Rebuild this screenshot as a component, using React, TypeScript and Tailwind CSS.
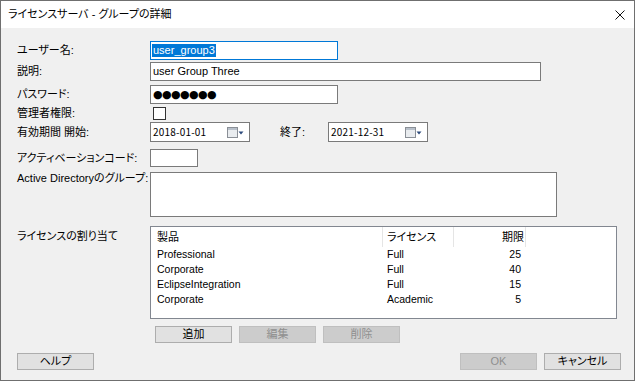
import React from 'react';

const jp = "font-['Liberation_Sans','Noto_Sans_CJK_JP',sans-serif] [font-feature-settings:'palt']";
const cjk = "font-['Noto_Sans_CJK_JP','Noto_Sans',sans-serif] [font-feature-settings:'palt']";

interface LicenseRow {
  product: string;
  license: string;
  limit: number;
}

const rows: LicenseRow[] = [
  { product: 'Professional', license: 'Full', limit: 25 },
  { product: 'Corporate', license: 'Full', limit: 40 },
  { product: 'EclipseIntegration', license: 'Full', limit: 15 },
  { product: 'Corporate', license: 'Academic', limit: 5 },
];

const CalendarIcon: React.FC = () => (
  <svg width="17" height="11" viewBox="0 0 17 11" className="shrink-0">
    <rect x="0.5" y="0.5" width="10" height="10" fill="#e9ecef" stroke="#8a8f96" />
    <rect x="1" y="1" width="9" height="2" fill="#b8c0ca" />
    <path d="M11.5 4.5 L16.5 4.5 L14 7.5 Z" fill="#2c4a7c" />
  </svg>
);

const DateBox: React.FC<{ value: string }> = ({ value }) => (
  <div className="w-[100px] h-[20px] bg-white border border-[#7a7a7a] flex items-center pl-[2px] pr-[5px] justify-between">
    <span className={`${cjk} text-[10px] leading-none text-black tracking-[0.2px]`}>{value}</span>
    <CalendarIcon />
  </div>
);

const Button: React.FC<{ label: string; disabled?: boolean }> = ({ label, disabled }) => (
  <div
    className={`w-[77px] h-[17px] flex items-center justify-center border text-[11px] leading-none ${jp} ${
      disabled ? 'bg-[#cccccc] border-[#bfbfbf] text-[#8f8f8f]' : 'bg-[#e1e1e1] border-[#adadad] text-black'
    }`}
  >
    {label}
  </div>
);

const Label: React.FC<{ children: React.ReactNode }> = ({ children }) => (
  <div className={`w-[133px] shrink-0 whitespace-nowrap text-[11px] leading-none text-black ${jp}`}>{children}</div>
);

const App: React.FC = () => {
  return (
    <div className="w-[635px] h-[381px] border border-[#6f6f6f] flex flex-col bg-white overflow-hidden">
      {/* title bar */}
      <div className="h-[27px] shrink-0 bg-white flex items-center justify-between pl-[7px] pr-[9px]">
        <span className={`${jp} text-[11px] leading-none text-black`}>ライセンスサーバ - グループの詳細</span>
        <svg width="10" height="10" viewBox="0 0 10 10">
          <path d="M0.5 0.5 L9.5 9.5 M9.5 0.5 L0.5 9.5" stroke="#111" strokeWidth="1" />
        </svg>
      </div>

      {/* body */}
      <div className="flex-1 bg-[#f0f0f0] pl-[16px] flex flex-col">
        <div className="mt-[13px] flex items-center">
          <Label>ユーザー名:</Label>
          <div className="w-[188px] h-[19px] bg-white border border-[#0078d7] flex items-center pl-[1px]">
            <span className={`${jp} text-[11px] leading-[13px] bg-[#0078d7] text-white px-[1px]`}>user_group3</span>
          </div>
        </div>

        <div className="mt-[2px] flex items-center">
          <Label>説明:</Label>
          <div className="w-[391px] h-[19px] bg-white border border-[#7a7a7a] flex items-center pl-[2px]">
            <span className={`${jp} text-[11px] leading-none text-black`}>user Group Three</span>
          </div>
        </div>

        <div className="mt-[4px] flex items-center">
          <Label>パスワード:</Label>
          <div className="w-[188px] h-[19px] bg-white border border-[#7a7a7a] flex items-center pl-[2px]">
            <span className="font-['DejaVu_Sans',sans-serif] text-[11px] leading-none text-black tracking-[-0.6px]">●●●●●●●</span>
          </div>
        </div>

        <div className="mt-[3px] h-[13px] flex items-center">
          <Label>管理者権限:</Label>
          <div className="ml-[3px] w-[13px] h-[13px] bg-white border border-[#333333]" />
        </div>

        <div className="mt-[2px] flex items-center">
          <Label>有効期間 開始:</Label>
          <DateBox value="2018-01-01" />
          <div className={`ml-[30px] w-[48px] text-[11px] leading-none text-black ${jp}`}>終了:</div>
          <DateBox value="2021-12-31" />
        </div>

        <div className="mt-[7px] flex items-center">
          <Label>アクティベーションコード:</Label>
          <div className="w-[48px] h-[18px] bg-white border border-[#7a7a7a]" />
        </div>

        <div className="mt-[5px] flex items-start">
          <div className="pt-[1px]">
            <Label>Active Directoryのグループ:</Label>
          </div>
          <div className="w-[407px] h-[45px] bg-white border border-[#7a7a7a]" />
        </div>

        <div className="mt-[9px] flex items-start">
          <div className="pt-[5px]">
            <Label>ライセンスの割り当て</Label>
          </div>
          <div className="w-[467px] h-[93px] bg-white border border-[#828790] flex flex-col">
            <div className={`h-[20px] flex items-stretch text-[11px] leading-none text-black ${jp}`}>
              <div className="w-[232px] pl-[6px] flex items-center border-r border-[#e5e5e5]">製品</div>
              <div className="w-[71px] pl-[4px] flex items-center border-r border-[#e5e5e5]">ライセンス</div>
              <div className="w-[72px] pr-[1px] flex items-center justify-end border-r border-[#e5e5e5]">期限</div>
            </div>
            {rows.map((r, i) => (
              <div key={i} className={`h-[15px] flex items-center text-[10.5px] leading-none text-black ${jp}`}>
                <div className="w-[232px] pl-[6px]">{r.product}</div>
                <div className="w-[71px] pl-[4px]">{r.license}</div>
                <div className="w-[72px] pr-[5px] text-right">{r.limit}</div>
              </div>
            ))}
          </div>
        </div>

        <div className="mt-[7px] pl-[138px] flex gap-[7px]">
          <Button label="追加" />
          <Button label="編集" disabled />
          <Button label="削除" disabled />
        </div>

        <div className="mt-[10px] flex pr-[13px]">
          <Button label="ヘルプ" />
          <div className="flex-1" />
          <div className="flex gap-[7px]">
            <Button label="OK" disabled />
            <Button label="キャンセル" />
          </div>
        </div>
      </div>
    </div>
  );
};

export default App;
